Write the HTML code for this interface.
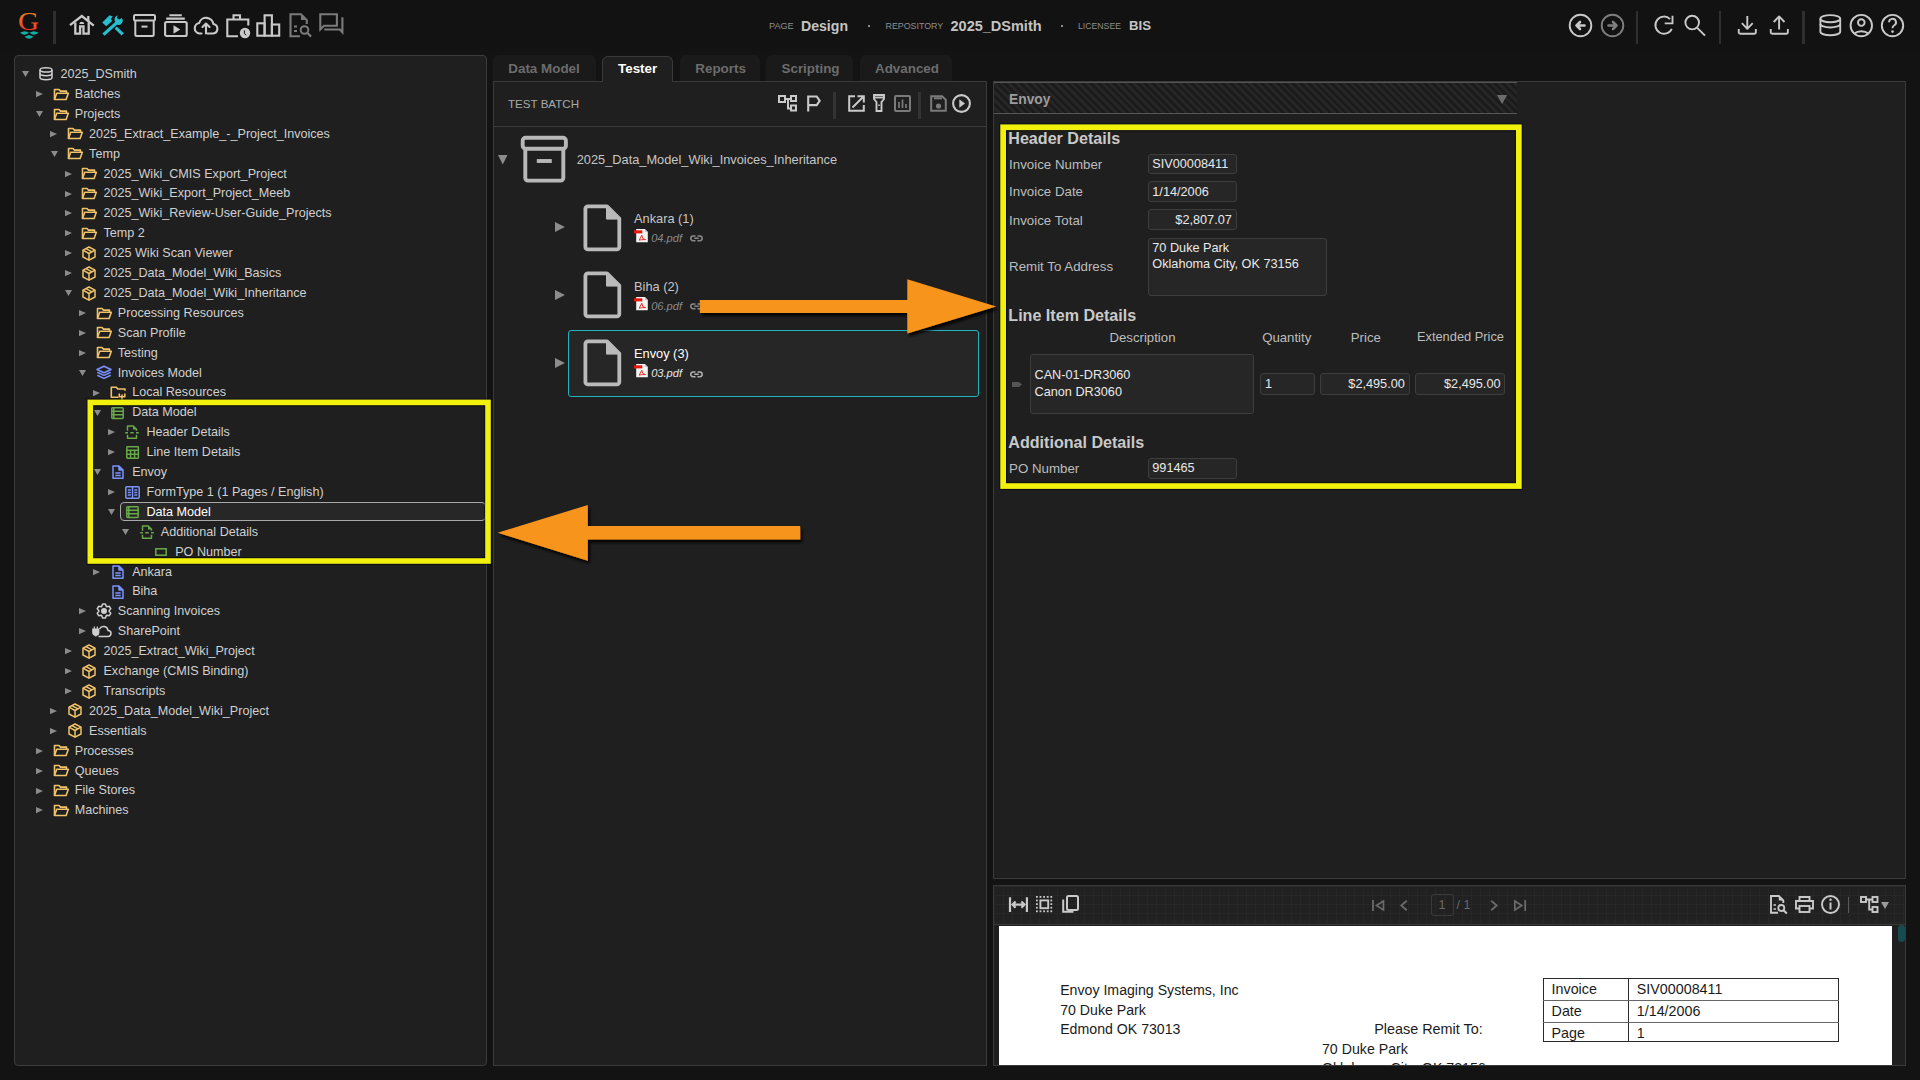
<!DOCTYPE html><html><head><meta charset="utf-8"><title>Design</title><style>
*{margin:0;padding:0;box-sizing:border-box}
html,body{width:1920px;height:1080px;overflow:hidden;background:#131313;font-family:"Liberation Sans",sans-serif;color:#c6c6c6}
.a{position:absolute}
.panel{position:absolute;background:#1f1f1f;border:1px solid #3a3a3a}
.row{position:absolute;height:20px;line-height:20px;white-space:nowrap;font-size:12.6px;color:#c6c6c6}
svg{position:absolute;overflow:visible}
.t{position:absolute;white-space:nowrap}
</style></head><body><div class="a" style="left:0;top:0;width:1920px;height:50px;background:#121212"></div><div class="panel" style="left:14px;top:55px;width:473px;height:1011px;border-radius:4px;border-color:#3b3b3b"></div><svg style="left:22.0px;top:71.2px" width="7" height="6" viewBox="0 0 7 6" ><path d="M0 0h7L3.5 6z" fill="#8c8c8c"/></svg><svg style="left:39.2px;top:67.4px" width="14" height="14" viewBox="0 0 14 14" ><g fill="none" stroke="#cfcfcf" stroke-width="1.5"><ellipse cx="7" cy="2.9" rx="6" ry="2.2"/><path d="M1 2.9v7.6c0 1.2 2.7 2.2 6 2.2s6-1 6-2.2V2.9"/><path d="M1 6.6c0 1.2 2.7 2.2 6 2.2s6-1 6-2.2"/></g></svg><div class="row" style="left:60.40px;top:64.00px;color:#d0d0d0">2025_DSmith</div><svg style="left:36.0px;top:91.00000000000001px" width="7" height="6.2" viewBox="0 0 7 6.2" ><path d="M0 0l7 3.1L0 6.2z" fill="#8c8c8c"/></svg><svg style="left:52.550000000000004px;top:87.60000000000001px" width="16" height="13" viewBox="0 0 16 13" ><g fill="none" stroke="#f0c26a" stroke-width="1.6" stroke-linejoin="round"><path d="M1.5 11.5V1.5h4.5l1.5 1.6h6v2.2"/><path d="M1.5 11.5l2.2-6.2h11.6l-2.2 6.2z"/></g></svg><div class="row" style="left:74.75px;top:83.90px;color:#d0d0d0">Batches</div><svg style="left:36.35px;top:111.0px" width="7" height="6" viewBox="0 0 7 6" ><path d="M0 0h7L3.5 6z" fill="#8c8c8c"/></svg><svg style="left:52.550000000000004px;top:107.5px" width="16" height="13" viewBox="0 0 16 13" ><g fill="none" stroke="#f0c26a" stroke-width="1.6" stroke-linejoin="round"><path d="M1.5 11.5V1.5h4.5l1.5 1.6h6v2.2"/><path d="M1.5 11.5l2.2-6.2h11.6l-2.2 6.2z"/></g></svg><div class="row" style="left:74.75px;top:103.80px;color:#d0d0d0">Projects</div><svg style="left:50.35px;top:130.79999999999998px" width="7" height="6.2" viewBox="0 0 7 6.2" ><path d="M0 0l7 3.1L0 6.2z" fill="#8c8c8c"/></svg><svg style="left:66.9px;top:127.39999999999998px" width="16" height="13" viewBox="0 0 16 13" ><g fill="none" stroke="#f0c26a" stroke-width="1.6" stroke-linejoin="round"><path d="M1.5 11.5V1.5h4.5l1.5 1.6h6v2.2"/><path d="M1.5 11.5l2.2-6.2h11.6l-2.2 6.2z"/></g></svg><div class="row" style="left:89.10px;top:123.70px;color:#d0d0d0">2025_Extract_Example_-_Project_Invoices</div><svg style="left:50.7px;top:150.79999999999998px" width="7" height="6" viewBox="0 0 7 6" ><path d="M0 0h7L3.5 6z" fill="#8c8c8c"/></svg><svg style="left:66.9px;top:147.29999999999998px" width="16" height="13" viewBox="0 0 16 13" ><g fill="none" stroke="#f0c26a" stroke-width="1.6" stroke-linejoin="round"><path d="M1.5 11.5V1.5h4.5l1.5 1.6h6v2.2"/><path d="M1.5 11.5l2.2-6.2h11.6l-2.2 6.2z"/></g></svg><div class="row" style="left:89.10px;top:143.60px;color:#d0d0d0">Temp</div><svg style="left:64.7px;top:170.6px" width="7" height="6.2" viewBox="0 0 7 6.2" ><path d="M0 0l7 3.1L0 6.2z" fill="#8c8c8c"/></svg><svg style="left:81.25px;top:167.2px" width="16" height="13" viewBox="0 0 16 13" ><g fill="none" stroke="#f0c26a" stroke-width="1.6" stroke-linejoin="round"><path d="M1.5 11.5V1.5h4.5l1.5 1.6h6v2.2"/><path d="M1.5 11.5l2.2-6.2h11.6l-2.2 6.2z"/></g></svg><div class="row" style="left:103.45px;top:163.50px;color:#d0d0d0">2025_Wiki_CMIS Export_Project</div><svg style="left:64.7px;top:190.49999999999997px" width="7" height="6.2" viewBox="0 0 7 6.2" ><path d="M0 0l7 3.1L0 6.2z" fill="#8c8c8c"/></svg><svg style="left:81.25px;top:187.09999999999997px" width="16" height="13" viewBox="0 0 16 13" ><g fill="none" stroke="#f0c26a" stroke-width="1.6" stroke-linejoin="round"><path d="M1.5 11.5V1.5h4.5l1.5 1.6h6v2.2"/><path d="M1.5 11.5l2.2-6.2h11.6l-2.2 6.2z"/></g></svg><div class="row" style="left:103.45px;top:183.40px;color:#d0d0d0">2025_Wiki_Export_Project_Meeb</div><svg style="left:64.7px;top:210.39999999999998px" width="7" height="6.2" viewBox="0 0 7 6.2" ><path d="M0 0l7 3.1L0 6.2z" fill="#8c8c8c"/></svg><svg style="left:81.25px;top:206.99999999999997px" width="16" height="13" viewBox="0 0 16 13" ><g fill="none" stroke="#f0c26a" stroke-width="1.6" stroke-linejoin="round"><path d="M1.5 11.5V1.5h4.5l1.5 1.6h6v2.2"/><path d="M1.5 11.5l2.2-6.2h11.6l-2.2 6.2z"/></g></svg><div class="row" style="left:103.45px;top:203.30px;color:#d0d0d0">2025_Wiki_Review-User-Guide_Projects</div><svg style="left:64.7px;top:230.29999999999998px" width="7" height="6.2" viewBox="0 0 7 6.2" ><path d="M0 0l7 3.1L0 6.2z" fill="#8c8c8c"/></svg><svg style="left:81.25px;top:226.89999999999998px" width="16" height="13" viewBox="0 0 16 13" ><g fill="none" stroke="#f0c26a" stroke-width="1.6" stroke-linejoin="round"><path d="M1.5 11.5V1.5h4.5l1.5 1.6h6v2.2"/><path d="M1.5 11.5l2.2-6.2h11.6l-2.2 6.2z"/></g></svg><div class="row" style="left:103.45px;top:223.20px;color:#d0d0d0">Temp 2</div><svg style="left:64.7px;top:250.2px" width="7" height="6.2" viewBox="0 0 7 6.2" ><path d="M0 0l7 3.1L0 6.2z" fill="#8c8c8c"/></svg><svg style="left:82.25px;top:245.7px" width="14" height="15" viewBox="0 0 14 15" ><g fill="none" stroke="#f0c26a" stroke-width="1.5" stroke-linejoin="round"><path d="M7 1l6 3.2v6.8L7 14.2 1 11V4.2z"/><path d="M1 4.2l6 3.3 6-3.3M7 7.5v6.7M4 2.6l6 3.3"/></g></svg><div class="row" style="left:103.45px;top:243.10px;color:#d0d0d0">2025 Wiki Scan Viewer</div><svg style="left:64.7px;top:270.09999999999997px" width="7" height="6.2" viewBox="0 0 7 6.2" ><path d="M0 0l7 3.1L0 6.2z" fill="#8c8c8c"/></svg><svg style="left:82.25px;top:265.59999999999997px" width="14" height="15" viewBox="0 0 14 15" ><g fill="none" stroke="#f0c26a" stroke-width="1.5" stroke-linejoin="round"><path d="M7 1l6 3.2v6.8L7 14.2 1 11V4.2z"/><path d="M1 4.2l6 3.3 6-3.3M7 7.5v6.7M4 2.6l6 3.3"/></g></svg><div class="row" style="left:103.45px;top:263.00px;color:#d0d0d0">2025_Data_Model_Wiki_Basics</div><svg style="left:65.05px;top:290.09999999999997px" width="7" height="6" viewBox="0 0 7 6" ><path d="M0 0h7L3.5 6z" fill="#8c8c8c"/></svg><svg style="left:82.25px;top:285.49999999999994px" width="14" height="15" viewBox="0 0 14 15" ><g fill="none" stroke="#f0c26a" stroke-width="1.5" stroke-linejoin="round"><path d="M7 1l6 3.2v6.8L7 14.2 1 11V4.2z"/><path d="M1 4.2l6 3.3 6-3.3M7 7.5v6.7M4 2.6l6 3.3"/></g></svg><div class="row" style="left:103.45px;top:282.90px;color:#d0d0d0">2025_Data_Model_Wiki_Inheritance</div><svg style="left:79.05px;top:309.8999999999999px" width="7" height="6.2" viewBox="0 0 7 6.2" ><path d="M0 0l7 3.1L0 6.2z" fill="#8c8c8c"/></svg><svg style="left:95.6px;top:306.49999999999994px" width="16" height="13" viewBox="0 0 16 13" ><g fill="none" stroke="#f0c26a" stroke-width="1.6" stroke-linejoin="round"><path d="M1.5 11.5V1.5h4.5l1.5 1.6h6v2.2"/><path d="M1.5 11.5l2.2-6.2h11.6l-2.2 6.2z"/></g></svg><div class="row" style="left:117.80px;top:302.80px;color:#d0d0d0">Processing Resources</div><svg style="left:79.05px;top:329.79999999999995px" width="7" height="6.2" viewBox="0 0 7 6.2" ><path d="M0 0l7 3.1L0 6.2z" fill="#8c8c8c"/></svg><svg style="left:95.6px;top:326.4px" width="16" height="13" viewBox="0 0 16 13" ><g fill="none" stroke="#f0c26a" stroke-width="1.6" stroke-linejoin="round"><path d="M1.5 11.5V1.5h4.5l1.5 1.6h6v2.2"/><path d="M1.5 11.5l2.2-6.2h11.6l-2.2 6.2z"/></g></svg><div class="row" style="left:117.80px;top:322.70px;color:#d0d0d0">Scan Profile</div><svg style="left:79.05px;top:349.69999999999993px" width="7" height="6.2" viewBox="0 0 7 6.2" ><path d="M0 0l7 3.1L0 6.2z" fill="#8c8c8c"/></svg><svg style="left:95.6px;top:346.29999999999995px" width="16" height="13" viewBox="0 0 16 13" ><g fill="none" stroke="#f0c26a" stroke-width="1.6" stroke-linejoin="round"><path d="M1.5 11.5V1.5h4.5l1.5 1.6h6v2.2"/><path d="M1.5 11.5l2.2-6.2h11.6l-2.2 6.2z"/></g></svg><div class="row" style="left:117.80px;top:342.60px;color:#d0d0d0">Testing</div><svg style="left:79.4px;top:369.7px" width="7" height="6" viewBox="0 0 7 6" ><path d="M0 0h7L3.5 6z" fill="#8c8c8c"/></svg><svg style="left:95.6px;top:365.4px" width="16" height="15" viewBox="0 0 16 15" ><g fill="none" stroke="#7b93ff" stroke-width="1.5" stroke-linejoin="round"><path d="M8 1.2l7 3.3-7 3.3-7-3.3z"/><path d="M1.3 7.2L8 10.4l6.7-3.2"/><path d="M1.3 10.2L8 13.4l6.7-3.2"/></g></svg><div class="row" style="left:117.80px;top:362.50px;color:#d0d0d0">Invoices Model</div><svg style="left:93.4px;top:389.49999999999994px" width="7" height="6.2" viewBox="0 0 7 6.2" ><path d="M0 0l7 3.1L0 6.2z" fill="#8c8c8c"/></svg><svg style="left:109.95px;top:386.29999999999995px" width="17" height="15" viewBox="0 0 17 15" ><g fill="none" stroke="#f0c26a" stroke-width="1.6" stroke-linejoin="round"><path d="M8.5 11.3H1.3V1.3h5l1.5 1.7h7.2v1.8"/><path d="M12 14.5V8.5M9.3 7.5v3.3h5.5V7.5"/></g></svg><div class="row" style="left:132.15px;top:382.40px;color:#d0d0d0">Local Resources</div><svg style="left:93.75px;top:409.49999999999994px" width="7" height="6" viewBox="0 0 7 6" ><path d="M0 0h7L3.5 6z" fill="#8c8c8c"/></svg><svg style="left:111.45px;top:406.49999999999994px" width="13" height="12" viewBox="0 0 13 12" ><g fill="none" stroke="#68a84a" stroke-width="1.5"><rect x="0.8" y="0.8" width="11.4" height="10.6" rx="0.8"/><path d="M0.8 4.3h11.4M0.8 7.8h11.4M2.8 0.8v10.6"/></g></svg><div class="row" style="left:132.15px;top:402.30px;color:#d0d0d0">Data Model</div><svg style="left:107.75px;top:429.29999999999995px" width="7" height="6.2" viewBox="0 0 7 6.2" ><path d="M0 0l7 3.1L0 6.2z" fill="#8c8c8c"/></svg><svg style="left:125.30000000000001px;top:425.4px" width="14" height="15" viewBox="0 0 14 15" ><g fill="none" stroke="#68a84a" stroke-width="1.5" stroke-linejoin="round"><path d="M2.5 5.8V1h5.7l3.3 3.3v1.5"/><path d="M2.5 9.8v3.5h9V9.8"/><path d="M0.2 7.8h2.8M5.3 7.8h3.4M11 7.8h2.8"/></g><path d="M8 1l3.5 3.5H8z" fill="#68a84a"/></svg><div class="row" style="left:146.50px;top:422.20px;color:#d0d0d0">Header Details</div><svg style="left:107.75px;top:449.19999999999993px" width="7" height="6.2" viewBox="0 0 7 6.2" ><path d="M0 0l7 3.1L0 6.2z" fill="#8c8c8c"/></svg><svg style="left:125.70000000000002px;top:445.99999999999994px" width="13.2" height="13" viewBox="0 0 13.2 13" ><g fill="none" stroke="#68a84a" stroke-width="1.5"><rect x="0.8" y="0.8" width="11.6" height="11.4" rx="0.6"/><path d="M0.8 4.2h11.6M0.8 8.2h11.6M4.6 4.2v8M8.6 4.2v8"/></g></svg><div class="row" style="left:146.50px;top:442.10px;color:#d0d0d0">Line Item Details</div><svg style="left:93.75px;top:469.2px" width="7" height="6" viewBox="0 0 7 6" ><path d="M0 0h7L3.5 6z" fill="#8c8c8c"/></svg><svg style="left:111.95px;top:465.2px" width="12" height="14" viewBox="0 0 12 14" ><g fill="none" stroke="#7b93ff" stroke-width="1.5" stroke-linejoin="round"><path d="M1 1h6l4 4v8.2H1z"/><path d="M7 1v4h4" fill="#7b93ff"/></g><path d="M3.3 8h5.4M3.3 10.6h5.4" stroke="#7b93ff" stroke-width="1.5"/></svg><div class="row" style="left:132.15px;top:462.00px;color:#d0d0d0">Envoy</div><svg style="left:107.75px;top:488.99999999999994px" width="7" height="6.2" viewBox="0 0 7 6.2" ><path d="M0 0l7 3.1L0 6.2z" fill="#8c8c8c"/></svg><svg style="left:124.80000000000001px;top:485.59999999999997px" width="15" height="13" viewBox="0 0 15 13" ><g fill="none" stroke="#7b93ff" stroke-width="1.5"><rect x="0.8" y="0.8" width="13.4" height="11.4" rx="1"/><path d="M7.5 0.8v11.4"/></g><path d="M2.8 4h3M2.8 6.5h3M2.8 9h3M9.3 4h3M9.3 6.5h3M9.3 9h3" stroke="#7b93ff" stroke-width="1.5"/></svg><div class="row" style="left:146.50px;top:481.90px;color:#d0d0d0">FormType 1 (1 Pages / English)</div><div class="a" style="left:119.5px;top:502.40px;width:366px;height:19px;border:1px solid #a9a9a9;border-radius:4px;background:#272727"></div><svg style="left:108.1px;top:508.99999999999994px" width="7" height="6" viewBox="0 0 7 6" ><path d="M0 0h7L3.5 6z" fill="#8c8c8c"/></svg><svg style="left:125.80000000000001px;top:505.99999999999994px" width="13" height="12" viewBox="0 0 13 12" ><g fill="none" stroke="#68a84a" stroke-width="1.5"><rect x="0.8" y="0.8" width="11.4" height="10.6" rx="0.8"/><path d="M0.8 4.3h11.4M0.8 7.8h11.4M2.8 0.8v10.6"/></g></svg><div class="row" style="left:146.50px;top:501.80px;color:#ffffff">Data Model</div><svg style="left:122.45px;top:528.9000000000001px" width="7" height="6" viewBox="0 0 7 6" ><path d="M0 0h7L3.5 6z" fill="#8c8c8c"/></svg><svg style="left:139.65px;top:524.9000000000001px" width="14" height="15" viewBox="0 0 14 15" ><g fill="none" stroke="#68a84a" stroke-width="1.5" stroke-linejoin="round"><path d="M2.5 5.8V1h5.7l3.3 3.3v1.5"/><path d="M2.5 9.8v3.5h9V9.8"/><path d="M0.2 7.8h2.8M5.3 7.8h3.4M11 7.8h2.8"/></g><path d="M8 1l3.5 3.5H8z" fill="#68a84a"/></svg><div class="row" style="left:160.85px;top:521.70px;color:#d0d0d0">Additional Details</div><svg style="left:155.0px;top:547.8px" width="12" height="8" viewBox="0 0 12 8" ><rect x="0.8" y="0.8" width="10.4" height="6.4" fill="none" stroke="#68a84a" stroke-width="1.5"/></svg><div class="row" style="left:175.20px;top:541.60px;color:#d0d0d0">PO Number</div><svg style="left:93.4px;top:568.6px" width="7" height="6.2" viewBox="0 0 7 6.2" ><path d="M0 0l7 3.1L0 6.2z" fill="#8c8c8c"/></svg><svg style="left:111.95px;top:564.7px" width="12" height="14" viewBox="0 0 12 14" ><g fill="none" stroke="#7b93ff" stroke-width="1.5" stroke-linejoin="round"><path d="M1 1h6l4 4v8.2H1z"/><path d="M7 1v4h4" fill="#7b93ff"/></g><path d="M3.3 8h5.4M3.3 10.6h5.4" stroke="#7b93ff" stroke-width="1.5"/></svg><div class="row" style="left:132.15px;top:561.50px;color:#d0d0d0">Ankara</div><svg style="left:111.95px;top:584.6px" width="12" height="14" viewBox="0 0 12 14" ><g fill="none" stroke="#7b93ff" stroke-width="1.5" stroke-linejoin="round"><path d="M1 1h6l4 4v8.2H1z"/><path d="M7 1v4h4" fill="#7b93ff"/></g><path d="M3.3 8h5.4M3.3 10.6h5.4" stroke="#7b93ff" stroke-width="1.5"/></svg><div class="row" style="left:132.15px;top:581.40px;color:#d0d0d0">Biha</div><svg style="left:79.05px;top:608.4px" width="7" height="6.2" viewBox="0 0 7 6.2" ><path d="M0 0l7 3.1L0 6.2z" fill="#8c8c8c"/></svg><svg style="left:96.6px;top:603.5px" width="14" height="14" viewBox="0 0 14 14" ><polygon points="5.59,0.04 8.41,0.04 9.40,2.61 9.60,2.73 12.32,2.30 13.73,4.74 12.00,6.88 12.00,7.12 13.73,9.26 12.32,11.70 9.60,11.27 9.40,11.39 8.41,13.96 5.59,13.96 4.60,11.39 4.40,11.27 1.68,11.70 0.27,9.26 2.00,7.12 2.00,6.88 0.27,4.74 1.68,2.30 4.40,2.73 4.60,2.61" fill="none" stroke="#cfcfcf" stroke-width="1.5" stroke-linejoin="round"/><circle cx="7" cy="7" r="3" fill="#cfcfcf"/></svg><div class="row" style="left:117.80px;top:601.30px;color:#d0d0d0">Scanning Invoices</div><svg style="left:79.05px;top:628.3px" width="7" height="6.2" viewBox="0 0 7 6.2" ><path d="M0 0l7 3.1L0 6.2z" fill="#8c8c8c"/></svg><svg style="left:92.1px;top:624.4px" width="20" height="15" viewBox="0 0 20 15" ><path d="M6.5 12.5h9.5a3 3 0 0 0 0-6 4.5 4.5 0 0 0-8.5-1.5" fill="none" stroke="#cfcfcf" stroke-width="1.5"/><path d="M0.8 5h6v3.5a3 3 0 0 1-6 0z M2.3 2.5v2.5M5.3 2.5v2.5M3.8 11v1.5" fill="#cfcfcf" stroke="#cfcfcf" stroke-width="1.2"/></svg><div class="row" style="left:117.80px;top:621.20px;color:#d0d0d0">SharePoint</div><svg style="left:64.7px;top:648.1999999999999px" width="7" height="6.2" viewBox="0 0 7 6.2" ><path d="M0 0l7 3.1L0 6.2z" fill="#8c8c8c"/></svg><svg style="left:82.25px;top:643.6999999999999px" width="14" height="15" viewBox="0 0 14 15" ><g fill="none" stroke="#f0c26a" stroke-width="1.5" stroke-linejoin="round"><path d="M7 1l6 3.2v6.8L7 14.2 1 11V4.2z"/><path d="M1 4.2l6 3.3 6-3.3M7 7.5v6.7M4 2.6l6 3.3"/></g></svg><div class="row" style="left:103.45px;top:641.10px;color:#d0d0d0">2025_Extract_Wiki_Project</div><svg style="left:64.7px;top:668.1px" width="7" height="6.2" viewBox="0 0 7 6.2" ><path d="M0 0l7 3.1L0 6.2z" fill="#8c8c8c"/></svg><svg style="left:82.25px;top:663.6px" width="14" height="15" viewBox="0 0 14 15" ><g fill="none" stroke="#f0c26a" stroke-width="1.5" stroke-linejoin="round"><path d="M7 1l6 3.2v6.8L7 14.2 1 11V4.2z"/><path d="M1 4.2l6 3.3 6-3.3M7 7.5v6.7M4 2.6l6 3.3"/></g></svg><div class="row" style="left:103.45px;top:661.00px;color:#d0d0d0">Exchange (CMIS Binding)</div><svg style="left:64.7px;top:688.0px" width="7" height="6.2" viewBox="0 0 7 6.2" ><path d="M0 0l7 3.1L0 6.2z" fill="#8c8c8c"/></svg><svg style="left:82.25px;top:683.5px" width="14" height="15" viewBox="0 0 14 15" ><g fill="none" stroke="#f0c26a" stroke-width="1.5" stroke-linejoin="round"><path d="M7 1l6 3.2v6.8L7 14.2 1 11V4.2z"/><path d="M1 4.2l6 3.3 6-3.3M7 7.5v6.7M4 2.6l6 3.3"/></g></svg><div class="row" style="left:103.45px;top:680.90px;color:#d0d0d0">Transcripts</div><svg style="left:50.35px;top:707.9px" width="7" height="6.2" viewBox="0 0 7 6.2" ><path d="M0 0l7 3.1L0 6.2z" fill="#8c8c8c"/></svg><svg style="left:67.9px;top:703.4px" width="14" height="15" viewBox="0 0 14 15" ><g fill="none" stroke="#f0c26a" stroke-width="1.5" stroke-linejoin="round"><path d="M7 1l6 3.2v6.8L7 14.2 1 11V4.2z"/><path d="M1 4.2l6 3.3 6-3.3M7 7.5v6.7M4 2.6l6 3.3"/></g></svg><div class="row" style="left:89.10px;top:700.80px;color:#d0d0d0">2025_Data_Model_Wiki_Project</div><svg style="left:50.35px;top:727.8px" width="7" height="6.2" viewBox="0 0 7 6.2" ><path d="M0 0l7 3.1L0 6.2z" fill="#8c8c8c"/></svg><svg style="left:67.9px;top:723.3px" width="14" height="15" viewBox="0 0 14 15" ><g fill="none" stroke="#f0c26a" stroke-width="1.5" stroke-linejoin="round"><path d="M7 1l6 3.2v6.8L7 14.2 1 11V4.2z"/><path d="M1 4.2l6 3.3 6-3.3M7 7.5v6.7M4 2.6l6 3.3"/></g></svg><div class="row" style="left:89.10px;top:720.70px;color:#d0d0d0">Essentials</div><svg style="left:36.0px;top:747.6999999999999px" width="7" height="6.2" viewBox="0 0 7 6.2" ><path d="M0 0l7 3.1L0 6.2z" fill="#8c8c8c"/></svg><svg style="left:52.550000000000004px;top:744.3px" width="16" height="13" viewBox="0 0 16 13" ><g fill="none" stroke="#f0c26a" stroke-width="1.6" stroke-linejoin="round"><path d="M1.5 11.5V1.5h4.5l1.5 1.6h6v2.2"/><path d="M1.5 11.5l2.2-6.2h11.6l-2.2 6.2z"/></g></svg><div class="row" style="left:74.75px;top:740.60px;color:#d0d0d0">Processes</div><svg style="left:36.0px;top:767.6px" width="7" height="6.2" viewBox="0 0 7 6.2" ><path d="M0 0l7 3.1L0 6.2z" fill="#8c8c8c"/></svg><svg style="left:52.550000000000004px;top:764.2px" width="16" height="13" viewBox="0 0 16 13" ><g fill="none" stroke="#f0c26a" stroke-width="1.6" stroke-linejoin="round"><path d="M1.5 11.5V1.5h4.5l1.5 1.6h6v2.2"/><path d="M1.5 11.5l2.2-6.2h11.6l-2.2 6.2z"/></g></svg><div class="row" style="left:74.75px;top:760.50px;color:#d0d0d0">Queues</div><svg style="left:36.0px;top:787.5px" width="7" height="6.2" viewBox="0 0 7 6.2" ><path d="M0 0l7 3.1L0 6.2z" fill="#8c8c8c"/></svg><svg style="left:52.550000000000004px;top:784.1px" width="16" height="13" viewBox="0 0 16 13" ><g fill="none" stroke="#f0c26a" stroke-width="1.6" stroke-linejoin="round"><path d="M1.5 11.5V1.5h4.5l1.5 1.6h6v2.2"/><path d="M1.5 11.5l2.2-6.2h11.6l-2.2 6.2z"/></g></svg><div class="row" style="left:74.75px;top:780.40px;color:#d0d0d0">File Stores</div><svg style="left:36.0px;top:807.4px" width="7" height="6.2" viewBox="0 0 7 6.2" ><path d="M0 0l7 3.1L0 6.2z" fill="#8c8c8c"/></svg><svg style="left:52.550000000000004px;top:804.0px" width="16" height="13" viewBox="0 0 16 13" ><g fill="none" stroke="#f0c26a" stroke-width="1.6" stroke-linejoin="round"><path d="M1.5 11.5V1.5h4.5l1.5 1.6h6v2.2"/><path d="M1.5 11.5l2.2-6.2h11.6l-2.2 6.2z"/></g></svg><div class="row" style="left:74.75px;top:800.30px;color:#d0d0d0">Machines</div><svg style="left:14px;top:8px" width="30" height="34" viewBox="0 0 30 34"><defs><linearGradient id="lg" x1="0" y1="0" x2="0" y2="1"><stop offset="0" stop-color="#f39c1c"/><stop offset="1" stop-color="#e8262a"/></linearGradient></defs><text x="0" y="0" transform="translate(14.4 21.6) scale(1.14 1)" text-anchor="middle" font-family="Liberation Serif" font-size="25.5" fill="url(#lg)">G</text><g fill="#10b0a8"><path d="M6 24.8q2.8-1.2 4.5-1.6 1.7.4 4.5 1.6-2.5 1.8-4.5 2-2-.2-4.5-2z"/><path d="M15.5 24.8q2.8-1.2 4.5-1.6 1.7.4 4.5 1.6-2.5 1.8-4.5 2-2-.2-4.5-2z"/><path d="M10.5 28.8q2.8-1.4 4.5-1.8 1.7.4 4.5 1.8-2.5 1.8-4.5 2-2-.2-4.5-2z"/></g></svg><div class="a" style="left:53px;top:11px;width:2.6px;height:33px;background:#2f2f2f"></div><svg style="left:69px;top:14px" width="26" height="22" viewBox="0 0 26 22" ><g fill="none" stroke="#c9c9c9" stroke-width="2.3" stroke-linejoin="miter"><path d="M1 11.2L12.8 2 24.8 11.6"/><path d="M6.3 8.6V19.6H11.1V12.4h3.4v7.2h5.2V8.6"/><path d="M19.3 8V2"/></g><path d="M10.4 9.9a2.4 2.2 0 0 1 4.8 0z" fill="#c9c9c9"/></svg><svg style="left:101px;top:14px" width="23" height="23" viewBox="0 0 23 23" ><g fill="#27bfd0"><path d="M1.2 8.5L8.6 1.2 11.8 2.6 9.8 5 11.2 7 5.2 12.2z"/><path d="M1.3 19.5L15 7.2 17.3 9.5 3.6 21.8z"/><path d="M13.6 14.8l2.2-2.2 7 6.6-2.2 2.4z"/><path d="M15.2 8.8a4.3 4.3 0 0 1 1.5-7.6l-.9 2.9 2.6 1.5 2.4-1.6a4.3 4.3 0 0 1-5.6 6.3z"/></g></svg><svg style="left:132px;top:13px" width="25" height="25" viewBox="0 0 25 25" ><g fill="none" stroke="#c9c9c9" stroke-width="2"><rect x="2" y="2.1" width="21" height="5.4" rx="1.2"/><path d="M3.3 7.5v14a1.5 1.5 0 0 0 1.5 1.5h15.4a1.5 1.5 0 0 0 1.5-1.5v-14"/><path d="M9.5 13.6h6"/></g></svg><svg style="left:163px;top:13px" width="25" height="25" viewBox="0 0 25 25" ><g fill="none" stroke="#c9c9c9" stroke-width="2.1"><path d="M6.4 2.2h12.4M3.2 5.6h18.6"/><rect x="2.1" y="9" width="21.6" height="14" rx="1.5"/></g><path d="M10.5 12.2l6.8 4.3-6.8 4.3z" fill="#c9c9c9"/></svg><svg style="left:193px;top:14px" width="27" height="21" viewBox="0 0 27 21" ><g fill="none" stroke="#c9c9c9" stroke-width="2.1" stroke-linejoin="round" stroke-linecap="round"><path d="M8.5 19.5H6.5a5.3 5.3 0 0 1-.3-10.5 7.3 7.3 0 0 1 14.2 1 4.8 4.8 0 0 1-.3 9.5h-5.5"/><path d="M13 19.5V10M9.5 13l3.5-3.5 3.5 3.5"/></g></svg><svg style="left:225px;top:13px" width="27" height="26" viewBox="0 0 27 26" ><g fill="none" stroke="#c9c9c9" stroke-width="2.1"><path d="M8.5 6.5V2.2h6.5v4.3"/><path d="M13 23.3H2.3V6.5h21v6"/></g><circle cx="20" cy="20" r="5.2" fill="#c9c9c9"/><path d="M19.4 17.3v3.2l1.8 1.6" stroke="#121212" stroke-width="1" fill="none"/></svg><svg style="left:256px;top:14px" width="26" height="23" viewBox="0 0 26 23" ><g fill="none" stroke="#c9c9c9" stroke-width="2.1"><rect x="1.3" y="9.3" width="7.3" height="12.4"/><rect x="8.6" y="1.3" width="7.3" height="20.4"/><rect x="15.9" y="10.5" width="7.3" height="11.2"/></g></svg><svg style="left:289px;top:13px" width="25" height="26" viewBox="0 0 25 26" ><g fill="none" stroke="#7a7a7a" stroke-width="2.1"><path d="M11 23.2H1.5V1.3h10.5l5.8 5.8V11"/></g><path d="M12 1.3l5.8 5.8H12z" fill="#7a7a7a"/><path d="M5 13.5h3M5 18h3" stroke="#7a7a7a" stroke-width="1.8"/><circle cx="15.5" cy="17" r="3.8" fill="none" stroke="#7a7a7a" stroke-width="2"/><path d="M18.3 19.8l3.8 3.8" stroke="#7a7a7a" stroke-width="2.2"/></svg><svg style="left:319px;top:13px" width="25" height="25" viewBox="0 0 25 25" ><g fill="none" stroke="#7a7a7a" stroke-width="2.1" stroke-linejoin="miter"><path d="M1.3 16.5V1.3h16.6v11.5H5z"/><path d="M5.3 16.5h15.6l2.5 2.8V4.3"/></g></svg><div class="t" style="left:769px;top:19px;font-size:9.1px;color:#8e8e8e;line-height:14px">PAGE</div><div class="t" style="left:801px;top:17px;font-size:14.1px;font-weight:bold;color:#c4c4c4;line-height:18px">Design</div><div class="a" style="left:867.6px;top:24.8px;width:2.4px;height:2.4px;background:#8e8e8e"></div><div class="t" style="left:885.5px;top:19px;font-size:8.85px;color:#8e8e8e;line-height:14px">REPOSITORY</div><div class="t" style="left:950.5px;top:17px;font-size:14.5px;font-weight:bold;color:#c4c4c4;line-height:18px">2025_DSmith</div><div class="a" style="left:1060.6px;top:24.8px;width:2.4px;height:2.4px;background:#8e8e8e"></div><div class="t" style="left:1078px;top:19px;font-size:8.7px;color:#8e8e8e;line-height:14px">LICENSEE</div><div class="t" style="left:1129px;top:17px;font-size:13.2px;font-weight:bold;color:#c4c4c4;line-height:18px">BIS</div><svg style="left:1568.0px;top:13px" width="25" height="25" viewBox="0 0 25 25" ><g transform="translate(12.5 12.5)"><circle r="10.8" fill="none" stroke="#c9c9c9" stroke-width="1.9"/><path d="M-4 0h8M-4 0l3.5-3.5M-4 0l3.5 3.5" stroke="#c9c9c9" stroke-width="2.6" fill="none" stroke-linecap="round" stroke-linejoin="round"/></g></svg><svg style="left:1599.5px;top:13px" width="25" height="25" viewBox="0 0 25 25" ><g transform="translate(12.5 12.5)"><circle r="10.8" fill="none" stroke="#7e7e7e" stroke-width="1.9"/><path d="M4 0h-8M4 0l-3.5-3.5M4 0l-3.5 3.5" stroke="#7e7e7e" stroke-width="2.6" fill="none" stroke-linecap="round" stroke-linejoin="round"/></g></svg><div class="a" style="left:1635.5px;top:11px;width:2.5px;height:33px;background:#2f2f2f"></div><div class="a" style="left:1718.8px;top:11px;width:2.5px;height:33px;background:#2f2f2f"></div><div class="a" style="left:1802.2px;top:11px;width:2.5px;height:33px;background:#2f2f2f"></div><svg style="left:1654px;top:15px" width="21" height="21" viewBox="0 0 21 21" ><g fill="none" stroke="#c9c9c9" stroke-width="1.9"><path d="M17.8 13.8A8.6 8.6 0 1 1 16.1 4.1"/><path d="M18.5 0.8v7.6h-7.8"/></g></svg><svg style="left:1684px;top:15px" width="22" height="22" viewBox="0 0 22 22" ><g fill="none" stroke="#c9c9c9" stroke-width="1.9"><circle cx="8.2" cy="7.6" r="6.8"/><path d="M13 12.6l8 8"/></g></svg><svg style="left:1737px;top:15px" width="21" height="21" viewBox="0 0 21 21" ><g fill="none" stroke="#c9c9c9" stroke-width="1.9" stroke-linejoin="round"><path d="M10.3 1v13.5M4.9 8.2l5.4 5.6 5.4-5.6"/><path d="M1.75 14v3.2a1.5 1.5 0 0 0 1.5 1.5h14.1a1.5 1.5 0 0 0 1.5-1.5V14"/></g></svg><svg style="left:1768.5px;top:15px" width="21" height="21" viewBox="0 0 21 21" ><g fill="none" stroke="#c9c9c9" stroke-width="1.9" stroke-linejoin="round"><path d="M10.1 14.5V1.5M4.7 7l5.4-5.6 5.4 5.6"/><path d="M1.75 14v3.2a1.5 1.5 0 0 0 1.5 1.5h14.1a1.5 1.5 0 0 0 1.5-1.5V14"/></g></svg><svg style="left:1818.5px;top:14px" width="23" height="23" viewBox="0 0 23 23" ><g fill="none" stroke="#c9c9c9" stroke-width="1.9"><ellipse cx="11.3" cy="4.7" rx="9.9" ry="3.6"/><path d="M1.4 4.7v13c0 2 4.4 3.6 9.9 3.6s9.9-1.6 9.9-3.6v-13"/><path d="M1.4 9.9c0 2 4.4 3.6 9.9 3.6s9.9-1.6 9.9-3.6"/></g></svg><svg style="left:1848.7px;top:13px" width="25" height="25" viewBox="0 0 25 25" ><g fill="none" stroke="#c9c9c9" stroke-width="1.9"><circle cx="12.3" cy="12.6" r="10.7"/><circle cx="12.3" cy="9.6" r="3.3"/><path d="M5.3 20.5a9 6.2 0 0 1 14 0"/></g></svg><svg style="left:1879.5px;top:13px" width="25" height="25" viewBox="0 0 25 25" ><g fill="none" stroke="#c9c9c9" stroke-width="1.9"><circle cx="12.5" cy="12.6" r="10.7"/><path d="M9 9.3a3.5 3.5 0 1 1 5 3.2c-1.2.6-1.5 1.3-1.5 2.8"/></g><circle cx="12.5" cy="18.6" r="1.3" fill="#c9c9c9"/></svg><div class="a" style="left:493px;top:55px;width:103.0px;height:26px;background:#1a1a1a;border-radius:6px 6px 0 0"></div><div class="t" style="top:59.55px;font-size:13.4px;line-height:17.42px;color:#6c6c6c;font-weight:bold;left:508.30px;">Data Model</div><div class="a" style="left:602.4px;top:56px;width:70.4px;height:26px;background:#1f1f1f;border:1px solid #3a3a3a;border-bottom:none;border-radius:6px 6px 0 0;z-index:2"></div><div class="t" style="top:59.55px;font-size:13.4px;line-height:17.42px;color:#ffffff;font-weight:bold;left:618.00px;z-index:3">Tester</div><div class="a" style="left:680px;top:55px;width:80.0px;height:26px;background:#1a1a1a;border-radius:6px 6px 0 0"></div><div class="t" style="top:59.55px;font-size:13.4px;line-height:17.42px;color:#6c6c6c;font-weight:bold;left:695.30px;">Reports</div><div class="a" style="left:766.3px;top:55px;width:86.7px;height:26px;background:#1a1a1a;border-radius:6px 6px 0 0"></div><div class="t" style="top:59.55px;font-size:13.4px;line-height:17.42px;color:#6c6c6c;font-weight:bold;left:781.50px;">Scripting</div><div class="a" style="left:860px;top:55px;width:92.0px;height:26px;background:#1a1a1a;border-radius:6px 6px 0 0"></div><div class="t" style="top:59.55px;font-size:13.4px;line-height:17.42px;color:#6c6c6c;font-weight:bold;left:875.00px;">Advanced</div><div class="panel" style="left:493px;top:81px;width:494px;height:985px"></div><div class="a" style="left:494px;top:126px;width:492px;height:1px;background:#3a3a3a"></div><div class="t" style="top:96.34px;font-size:11.6px;line-height:15.08px;color:#a9a9a9;font-weight:normal;left:508.00px;">TEST BATCH</div><svg style="left:778px;top:95px" width="19" height="17" viewBox="0 0 19 17" ><g fill="none" stroke="#c9c9c9" stroke-width="2"><rect x="1" y="1" width="6" height="6"/><rect x="13" y="1" width="5" height="5"/><rect x="13" y="10.5" width="5" height="5"/><path d="M7 4h6M10 4v9.5h3"/></g></svg><svg style="left:807px;top:95px" width="14" height="17" viewBox="0 0 14 17" ><path d="M1.2 16.5V1.5h8.5l3 4.3-3 4.3H1.2" fill="none" stroke="#c9c9c9" stroke-width="2.1"/></svg><div class="a" style="left:833.3px;top:92px;width:2.4px;height:27px;background:#333"></div><svg style="left:848px;top:95px" width="17" height="17" viewBox="0 0 17 17" ><g fill="none" stroke="#c9c9c9" stroke-width="2"><path d="M7 1.2H1.2v14.6h14.6V10"/><path d="M4.5 12.5L15.5 1.5M9.5 1.2h6.3v6.3"/></g></svg><svg style="left:873px;top:94px" width="12" height="18" viewBox="0 0 12 18" ><g fill="none" stroke="#c9c9c9" stroke-width="1.9"><path d="M1 1h10v4L8.5 8v9h-5V8L1 5z"/><path d="M1 3.5h10"/></g><path d="M5.2 11.3h1.6" stroke="#c9c9c9" stroke-width="1.6"/></svg><svg style="left:893.5px;top:95px" width="17" height="17" viewBox="0 0 17 17" ><g fill="none" stroke="#7a7a7a" stroke-width="2"><rect x="1" y="1" width="15" height="15" rx="1"/></g><path d="M5 13V7M8.5 13V4.5M12 13V9" stroke="#7a7a7a" stroke-width="1.7"/></svg><div class="a" style="left:918.3px;top:92px;width:2.4px;height:27px;background:#333"></div><svg style="left:930px;top:95px" width="17" height="17" viewBox="0 0 17 17" ><path d="M1.2 1.2h11l3.6 3.6v11H1.2z" fill="none" stroke="#7a7a7a" stroke-width="2"/><path d="M4 3.3h8" stroke="#7a7a7a" stroke-width="2"/><circle cx="8.5" cy="11" r="2.6" fill="#7a7a7a"/></svg><svg style="left:952px;top:94px" width="19" height="19" viewBox="0 0 19 19" ><circle cx="9.5" cy="9.5" r="8.4" fill="none" stroke="#c9c9c9" stroke-width="2.1"/><path d="M7.3 5.3l5.7 4.2-5.7 4.2z" fill="#c9c9c9"/></svg><svg style="left:497.5px;top:155px" width="10" height="10" viewBox="0 0 10 10" ><path d="M0 0h9.5L4.75 9.5z" fill="#8c8c8c"/></svg><svg style="left:520px;top:135px" width="48" height="48" viewBox="0 0 48 48" ><g fill="none" stroke="#b8b8b8" stroke-width="3.9"><rect x="2.7" y="2.8" width="43.2" height="10.9" rx="3"/><path d="M5.3 13.7v29.2a2.7 2.7 0 0 0 2.7 2.7h32.6a2.7 2.7 0 0 0 2.7-2.7V13.7"/><path d="M16.8 26h15"/></g></svg><div class="t" style="top:151.84px;font-size:12.8px;line-height:16.64px;color:#c6c6c6;font-weight:normal;left:576.70px;">2025_Data_Model_Wiki_Invoices_Inheritance</div><svg style="left:554.5px;top:222.4px" width="10" height="10" viewBox="0 0 10 10" ><path d="M0 0l9.9 5L0 10z" fill="#8c8c8c"/></svg><svg style="left:582.5px;top:203.5px" width="39" height="48" viewBox="0 0 39 48" ><path d="M5 2.3h19l12.3 12.3v28.3a2.5 2.5 0 0 1-2.5 2.5H4.9a2.5 2.5 0 0 1-2.5-2.5V4.8a2.5 2.5 0 0 1 2.5-2.5z" fill="none" stroke="#bababa" stroke-width="3.8" stroke-linejoin="round"/><path d="M23.5 2.3l12.8 12.8H23.5z" fill="#bababa" stroke="#bababa" stroke-width="1" stroke-linejoin="round"/></svg><div class="t" style="top:210.94px;font-size:12.8px;line-height:16.64px;color:#c6c6c6;font-weight:normal;left:634.00px;">Ankara (1)</div><svg style="left:634px;top:229.0px" width="14" height="14" viewBox="0 0 14 14" ><path d="M2.2 0h8.6l3 3v10.3H2.2z" fill="#f4f4f4"/><path d="M10.8 0v3h3z" fill="#c8c8c8"/><rect x="0" y="1.3" width="8.3" height="3.1" fill="#e8180c"/><path d="M5.2 11.2l2.6-5 1.2 3.6 2.6.8-4.2.1z" fill="none" stroke="#e0241a" stroke-width="0.9"/></svg><div class="t" style="top:231.24px;font-size:11.1px;line-height:14.43px;color:#8a8a8a;font-weight:normal;font-style:italic;left:651.20px;">04.pdf</div><svg style="left:689.5px;top:235.3px" width="13" height="7" viewBox="0 0 13 7" ><g fill="none" stroke="#8a8a8a" stroke-width="1.5"><path d="M5.5 0.9H3.2a2.4 2.4 0 0 0 0 4.8h2.3M7.5 0.9h2.3a2.4 2.4 0 0 1 0 4.8H7.5M4.3 3.3h4.4"/></g></svg><svg style="left:554.5px;top:290.0px" width="10" height="10" viewBox="0 0 10 10" ><path d="M0 0l9.9 5L0 10z" fill="#8c8c8c"/></svg><svg style="left:582.5px;top:271.1px" width="39" height="48" viewBox="0 0 39 48" ><path d="M5 2.3h19l12.3 12.3v28.3a2.5 2.5 0 0 1-2.5 2.5H4.9a2.5 2.5 0 0 1-2.5-2.5V4.8a2.5 2.5 0 0 1 2.5-2.5z" fill="none" stroke="#bababa" stroke-width="3.8" stroke-linejoin="round"/><path d="M23.5 2.3l12.8 12.8H23.5z" fill="#bababa" stroke="#bababa" stroke-width="1" stroke-linejoin="round"/></svg><div class="t" style="top:278.54px;font-size:12.8px;line-height:16.64px;color:#c6c6c6;font-weight:normal;left:634.00px;">Biha (2)</div><svg style="left:634px;top:296.6px" width="14" height="14" viewBox="0 0 14 14" ><path d="M2.2 0h8.6l3 3v10.3H2.2z" fill="#f4f4f4"/><path d="M10.8 0v3h3z" fill="#c8c8c8"/><rect x="0" y="1.3" width="8.3" height="3.1" fill="#e8180c"/><path d="M5.2 11.2l2.6-5 1.2 3.6 2.6.8-4.2.1z" fill="none" stroke="#e0241a" stroke-width="0.9"/></svg><div class="t" style="top:298.84px;font-size:11.1px;line-height:14.43px;color:#8a8a8a;font-weight:normal;font-style:italic;left:651.20px;">06.pdf</div><svg style="left:689.5px;top:302.9px" width="13" height="7" viewBox="0 0 13 7" ><g fill="none" stroke="#8a8a8a" stroke-width="1.5"><path d="M5.5 0.9H3.2a2.4 2.4 0 0 0 0 4.8h2.3M7.5 0.9h2.3a2.4 2.4 0 0 1 0 4.8H7.5M4.3 3.3h4.4"/></g></svg><div class="a" style="left:568.4px;top:330.2px;width:410.5px;height:66.4px;border:1.3px solid #22b3bf;border-radius:3px;background:#262626"></div><svg style="left:554.5px;top:357.6px" width="10" height="10" viewBox="0 0 10 10" ><path d="M0 0l9.9 5L0 10z" fill="#8c8c8c"/></svg><svg style="left:582.5px;top:338.7px" width="39" height="48" viewBox="0 0 39 48" ><path d="M5 2.3h19l12.3 12.3v28.3a2.5 2.5 0 0 1-2.5 2.5H4.9a2.5 2.5 0 0 1-2.5-2.5V4.8a2.5 2.5 0 0 1 2.5-2.5z" fill="none" stroke="#bababa" stroke-width="3.8" stroke-linejoin="round"/><path d="M23.5 2.3l12.8 12.8H23.5z" fill="#bababa" stroke="#bababa" stroke-width="1" stroke-linejoin="round"/></svg><div class="t" style="top:346.14px;font-size:12.8px;line-height:16.64px;color:#ffffff;font-weight:normal;left:634.00px;">Envoy (3)</div><svg style="left:634px;top:364.2px" width="14" height="14" viewBox="0 0 14 14" ><path d="M2.2 0h8.6l3 3v10.3H2.2z" fill="#f4f4f4"/><path d="M10.8 0v3h3z" fill="#c8c8c8"/><rect x="0" y="1.3" width="8.3" height="3.1" fill="#e8180c"/><path d="M5.2 11.2l2.6-5 1.2 3.6 2.6.8-4.2.1z" fill="none" stroke="#e0241a" stroke-width="0.9"/></svg><div class="t" style="top:366.44px;font-size:11.1px;line-height:14.43px;color:#e6e6e6;font-weight:normal;font-style:italic;left:651.20px;">03.pdf</div><svg style="left:689.5px;top:370.5px" width="13" height="7" viewBox="0 0 13 7" ><g fill="none" stroke="#b0b0b0" stroke-width="1.5"><path d="M5.5 0.9H3.2a2.4 2.4 0 0 0 0 4.8h2.3M7.5 0.9h2.3a2.4 2.4 0 0 1 0 4.8H7.5M4.3 3.3h4.4"/></g></svg><svg style="left:0;top:0;z-index:10" width="1920" height="1080"><defs><filter id="sh" x="-10%" y="-30%" width="130%" height="160%"><feGaussianBlur in="SourceAlpha" stdDeviation="1.6"/><feOffset dx="2" dy="2.5"/><feComponentTransfer><feFuncA type="linear" slope="0.9"/></feComponentTransfer><feMerge><feMergeNode/><feMergeNode in="SourceGraphic"/></feMerge></filter></defs><path filter="url(#sh)" fill="#f7941d" d="M699.8 300H907.3V279.2L996.2 306.4 907.3 333.5V313H699.8z"/><path filter="url(#sh)" fill="#f7941d" d="M800.2 526H587.8V505L497.6 532.8 587.8 560.7V539.6H800.2z"/></svg><div class="panel" style="left:993px;top:81px;width:913px;height:798px"></div><div class="a" style="left:994px;top:82px;width:523px;height:32px;border-top:1px solid #565656;border-bottom:1px solid #565656;background:repeating-linear-gradient(45deg,#1b1b1b 0px,#1b1b1b 2.75px,#262626 2.75px,#262626 5.5px)"></div><div class="t" style="top:91.25px;font-size:13.8px;line-height:17.94px;color:#9c9c9c;font-weight:bold;left:1009.00px;">Envoy</div><svg style="left:1497.2px;top:95px" width="10.2" height="9" viewBox="0 0 10.2 9" ><path d="M0 0h10.2L5.1 9z" fill="#6c6c6c"/></svg><svg style="left:0;top:0;z-index:5" width="1920" height="1080"><rect x="1003.15" y="127.25" width="515.70" height="358.80" fill="none" stroke="rgba(0,0,20,0.55)" stroke-width="7.90"/><rect x="1003.15" y="127.25" width="515.70" height="358.80" fill="none" stroke="#f1f10b" stroke-width="5.70"/><rect x="90.30" y="402.40" width="397.70" height="158.60" fill="none" stroke="rgba(0,0,20,0.55)" stroke-width="7.80"/><rect x="90.30" y="402.40" width="397.70" height="158.60" fill="none" stroke="#f1f10b" stroke-width="5.60"/></svg><div class="t" style="top:127.76px;font-size:16.1px;line-height:20.93px;color:#c9c9c9;font-weight:bold;left:1008.30px;">Header Details</div><div class="t" style="top:155.85px;font-size:13.3px;line-height:17.29px;color:#bdbdbd;font-weight:normal;left:1009.10px;">Invoice Number</div><div class="a" style="left:1147.5px;top:153.7px;width:89.1px;height:20.6px;background:#262626;border:1px solid #3d3d3d;border-radius:3px"></div><div class="t" style="top:156.44px;font-size:12.7px;line-height:16.51px;color:#e9e9e9;font-weight:normal;left:1152.30px;">SIV00008411</div><div class="t" style="top:183.45px;font-size:13.3px;line-height:17.29px;color:#bdbdbd;font-weight:normal;left:1009.10px;">Invoice Date</div><div class="a" style="left:1147.5px;top:181.3px;width:89.1px;height:21.1px;background:#262626;border:1px solid #3d3d3d;border-radius:3px"></div><div class="t" style="top:184.04px;font-size:12.7px;line-height:16.51px;color:#e9e9e9;font-weight:normal;left:1152.30px;">1/14/2006</div><div class="t" style="top:211.55px;font-size:13.3px;line-height:17.29px;color:#bdbdbd;font-weight:normal;left:1009.10px;">Invoice Total</div><div class="a" style="left:1147.5px;top:209.4px;width:89.1px;height:21.1px;background:#262626;border:1px solid #3d3d3d;border-radius:3px"></div><div class="t" style="top:212.14px;font-size:12.7px;line-height:16.51px;color:#e9e9e9;font-weight:normal;right:688.20px;">$2,807.07</div><div class="a" style="left:1147.5px;top:237.5px;width:179.1px;height:58.8px;background:#262626;border:1px solid #3d3d3d;border-radius:3px"></div><div class="t" style="top:239.54px;font-size:12.7px;line-height:16.51px;color:#e9e9e9;font-weight:normal;left:1152.30px;">70 Duke Park</div><div class="t" style="top:256.44px;font-size:12.7px;line-height:16.51px;color:#e9e9e9;font-weight:normal;left:1152.30px;">Oklahoma City, OK 73156</div><div class="t" style="top:257.75px;font-size:13.3px;line-height:17.29px;color:#bdbdbd;font-weight:normal;left:1009.10px;">Remit To Address</div><div class="t" style="top:304.96px;font-size:16.1px;line-height:20.93px;color:#c9c9c9;font-weight:bold;left:1008.30px;">Line Item Details</div><div class="t" style="top:329.05px;font-size:13.2px;line-height:17.16px;color:#bdbdbd;font-weight:normal;left:1109.50px;">Description</div><div class="t" style="top:329.05px;font-size:13.2px;line-height:17.16px;color:#bdbdbd;font-weight:normal;left:1262.20px;">Quantity</div><div class="t" style="top:329.05px;font-size:13.2px;line-height:17.16px;color:#bdbdbd;font-weight:normal;left:1350.80px;">Price</div><div class="t" style="top:329.39px;font-size:12.85px;line-height:16.71px;color:#bdbdbd;font-weight:normal;left:1416.90px;">Extended Price</div><svg style="left:1012.3px;top:382px" width="10" height="5" viewBox="0 0 10 5" ><path d="M0 0h7l3 2.5-3 2.5H0z" fill="#555"/></svg><div class="a" style="left:1030.2px;top:354.3px;width:224.1px;height:59.6px;background:#262626;border:1px solid #3d3d3d;border-radius:3px"></div><div class="t" style="top:367.44px;font-size:12.7px;line-height:16.51px;color:#e9e9e9;font-weight:normal;left:1034.50px;">CAN-01-DR3060</div><div class="t" style="top:384.34px;font-size:12.7px;line-height:16.51px;color:#e9e9e9;font-weight:normal;left:1034.50px;">Canon DR3060</div><div class="a" style="left:1260px;top:373.1px;width:54.8px;height:21.7px;background:#262626;border:1px solid #3d3d3d;border-radius:3px"></div><div class="t" style="top:375.94px;font-size:12.7px;line-height:16.51px;color:#e9e9e9;font-weight:normal;left:1265.00px;">1</div><div class="a" style="left:1319.9px;top:373.1px;width:90.0px;height:21.7px;background:#262626;border:1px solid #3d3d3d;border-radius:3px"></div><div class="t" style="top:375.94px;font-size:12.7px;line-height:16.51px;color:#e9e9e9;font-weight:normal;right:515.20px;">$2,495.00</div><div class="a" style="left:1414.6px;top:373.1px;width:90.9px;height:21.7px;background:#262626;border:1px solid #3d3d3d;border-radius:3px"></div><div class="t" style="top:375.94px;font-size:12.7px;line-height:16.51px;color:#e9e9e9;font-weight:normal;right:419.50px;">$2,495.00</div><div class="t" style="top:431.56px;font-size:16.1px;line-height:20.93px;color:#c9c9c9;font-weight:bold;left:1008.30px;">Additional Details</div><div class="t" style="top:459.75px;font-size:13.3px;line-height:17.29px;color:#bdbdbd;font-weight:normal;left:1009.10px;">PO Number</div><div class="a" style="left:1147.5px;top:457.5px;width:89.1px;height:21.1px;background:#262626;border:1px solid #3d3d3d;border-radius:3px"></div><div class="t" style="top:460.34px;font-size:12.7px;line-height:16.51px;color:#e9e9e9;font-weight:normal;left:1152.30px;">991465</div><div class="panel" style="left:993px;top:885px;width:913px;height:181px;background:#1f1f1f"></div><div class="a" style="left:994px;top:886px;width:911px;height:39px;background-color:#212121;background-image:linear-gradient(#262626 1px,transparent 1px),linear-gradient(90deg,#262626 1px,transparent 1px);background-size:9px 9px;border-bottom:1px solid #3a3a3a"></div><div class="a" style="left:998.9px;top:925.9px;width:893.5px;height:139.1px;background:#ffffff;overflow:hidden"><div class="t" style="top:55.20px;font-size:14.15px;line-height:18.39px;color:#1b1b1b;font-weight:normal;left:61.30px;">Envoy Imaging Systems, Inc</div><div class="t" style="top:74.70px;font-size:14.15px;line-height:18.39px;color:#1b1b1b;font-weight:normal;left:61.30px;">70 Duke Park</div><div class="t" style="top:94.20px;font-size:14.15px;line-height:18.39px;color:#1b1b1b;font-weight:normal;left:61.30px;">Edmond OK 73013</div><div class="t" style="top:93.95px;font-size:14.4px;line-height:18.72px;color:#1b1b1b;font-weight:normal;left:375.30px;">Please Remit To:</div><div class="t" style="top:113.65px;font-size:14.2px;line-height:18.46px;color:#1b1b1b;font-weight:normal;left:323.10px;">70 Duke Park</div><div class="t" style="top:133.15px;font-size:14.2px;line-height:18.46px;color:#1b1b1b;font-weight:normal;left:323.10px;">Oklahoma City, OK 73156</div><div class="a" style="left:544.1px;top:52.5px;width:295.7px;height:64px;border:1.2px solid #2a2a2a"></div><div class="a" style="left:629.3px;top:52.5px;width:1.2px;height:64px;background:#2a2a2a"></div><div class="a" style="left:544.1px;top:74.1px;width:295.7px;height:1px;background:#666"></div><div class="a" style="left:544.1px;top:96.6px;width:295.7px;height:1px;background:#666"></div><div class="t" style="top:54.15px;font-size:14.3px;line-height:18.59px;color:#1b1b1b;font-weight:normal;left:552.70px;">Invoice</div><div class="t" style="top:54.15px;font-size:14.3px;line-height:18.59px;color:#1b1b1b;font-weight:normal;left:637.90px;">SIV00008411</div><div class="t" style="top:76.45px;font-size:14.3px;line-height:18.59px;color:#1b1b1b;font-weight:normal;left:552.70px;">Date</div><div class="t" style="top:76.45px;font-size:14.3px;line-height:18.59px;color:#1b1b1b;font-weight:normal;left:637.90px;">1/14/2006</div><div class="t" style="top:97.75px;font-size:14.3px;line-height:18.59px;color:#1b1b1b;font-weight:normal;left:552.70px;">Page</div><div class="t" style="top:97.75px;font-size:14.3px;line-height:18.59px;color:#1b1b1b;font-weight:normal;left:637.90px;">1</div></div><div class="a" style="left:1897.9px;top:925.2px;width:7px;height:17px;border-radius:3.5px;background:#164c50"></div><svg style="left:1008px;top:896px" width="21" height="17" viewBox="0 0 21 17" ><g stroke="#c9c9c9" stroke-width="2.2" fill="none"><path d="M2 1.2v14.8M18.9 1.2v14.8"/><path d="M4.5 8.6h12M7.6 5.5L4.5 8.6l3.1 3.1M13.4 5.5l3.1 3.1-3.1 3.1"/></g></svg><svg style="left:1036.2px;top:896px" width="17" height="17" viewBox="0 0 17 17" ><rect x="0" y="0" width="1.8" height="1.8" fill="#c9c9c9"/><rect x="3.6" y="0" width="1.8" height="1.8" fill="#c9c9c9"/><rect x="7.2" y="0" width="1.8" height="1.8" fill="#c9c9c9"/><rect x="10.8" y="0" width="1.8" height="1.8" fill="#c9c9c9"/><rect x="14.4" y="0" width="1.8" height="1.8" fill="#c9c9c9"/><rect x="0" y="3.6" width="1.8" height="1.8" fill="#c9c9c9"/><rect x="14.4" y="3.6" width="1.8" height="1.8" fill="#c9c9c9"/><rect x="0" y="7.2" width="1.8" height="1.8" fill="#c9c9c9"/><rect x="14.4" y="7.2" width="1.8" height="1.8" fill="#c9c9c9"/><rect x="0" y="10.8" width="1.8" height="1.8" fill="#c9c9c9"/><rect x="14.4" y="10.8" width="1.8" height="1.8" fill="#c9c9c9"/><rect x="0" y="14.4" width="1.8" height="1.8" fill="#c9c9c9"/><rect x="3.6" y="14.4" width="1.8" height="1.8" fill="#c9c9c9"/><rect x="7.2" y="14.4" width="1.8" height="1.8" fill="#c9c9c9"/><rect x="10.8" y="14.4" width="1.8" height="1.8" fill="#c9c9c9"/><rect x="14.4" y="14.4" width="1.8" height="1.8" fill="#c9c9c9"/><rect x="4.4" y="4.4" width="7.8" height="7.8" fill="none" stroke="#c9c9c9" stroke-width="1.9"/></svg><svg style="left:1061.8px;top:895px" width="17" height="18" viewBox="0 0 17 18" ><g fill="none" stroke="#c9c9c9" stroke-width="2"><rect x="5" y="1" width="11" height="14" rx="1.5"/><path d="M1.2 4.5v12.3h10.3"/></g></svg><svg style="left:1372px;top:899.5px" width="13" height="11" viewBox="0 0 13 11" ><path d="M1 0v11" stroke="#6a6a6a" stroke-width="1.8"/><path d="M11.5 1L4.5 5.5l7 4.5z" fill="none" stroke="#6a6a6a" stroke-width="1.7"/></svg><svg style="left:1399.8px;top:899.8px" width="8" height="11" viewBox="0 0 8 11" ><path d="M6.8 0.8L1.3 5.5l5.5 4.7" fill="none" stroke="#6a6a6a" stroke-width="1.8"/></svg><div class="a" style="left:1430.5px;top:894.2px;width:23.2px;height:21.4px;border:1px solid #3a3a3a;border-radius:3px"></div><div class="t" style="top:896.54px;font-size:12.5px;line-height:16.25px;color:#6a6a6a;font-weight:normal;left:1438.50px;">1</div><div class="t" style="top:896.54px;font-size:12.5px;line-height:16.25px;color:#6a6a6a;font-weight:normal;left:1456.50px;">/ 1</div><svg style="left:1490.3px;top:899.8px" width="8" height="11" viewBox="0 0 8 11" ><path d="M1.2 0.8l5.5 4.7-5.5 4.7" fill="none" stroke="#6a6a6a" stroke-width="1.8"/></svg><svg style="left:1514px;top:899.5px" width="13" height="11" viewBox="0 0 13 11" ><path d="M11.2 0v11" stroke="#6a6a6a" stroke-width="1.8"/><path d="M0.8 1l7 4.5-7 4.5z" fill="none" stroke="#6a6a6a" stroke-width="1.7"/></svg><svg style="left:1770px;top:895px" width="19" height="19" viewBox="0 0 19 19" ><g fill="none" stroke="#c9c9c9" stroke-width="1.9"><path d="M8 17.8H1V1h7.8l4.5 4.5V8"/></g><path d="M8.8 1l4.5 4.5H8.8z" fill="#c9c9c9"/><path d="M3.5 10h2.5M3.5 14h2.5" stroke="#c9c9c9" stroke-width="1.6"/><circle cx="11.3" cy="13" r="3" fill="none" stroke="#c9c9c9" stroke-width="1.8"/><path d="M13.5 15.2l3.3 3.3" stroke="#c9c9c9" stroke-width="2"/></svg><svg style="left:1795px;top:896px" width="19" height="17" viewBox="0 0 19 17" ><g fill="none" stroke="#c9c9c9" stroke-width="1.9"><path d="M4.5 4.5V1h10v3.5"/><path d="M4.5 12.5H1V5h17v7.5h-3.5"/><rect x="4.5" y="10" width="10" height="6"/></g></svg><svg style="left:1820.8px;top:895px" width="19" height="19" viewBox="0 0 19 19" ><circle cx="9.5" cy="9.5" r="8.5" fill="none" stroke="#c9c9c9" stroke-width="1.9"/><path d="M9.5 7.5v7" stroke="#c9c9c9" stroke-width="2"/><circle cx="9.5" cy="4.8" r="1.2" fill="#c9c9c9"/></svg><div class="a" style="left:1848px;top:897px;width:1px;height:16px;background:#5a5a5a"></div><svg style="left:1859.5px;top:896px" width="19" height="17" viewBox="0 0 19 17" ><g fill="none" stroke="#c9c9c9" stroke-width="1.9"><rect x="1" y="1" width="5" height="5"/><rect x="12.5" y="1" width="5" height="5"/><rect x="12.5" y="11" width="5" height="5"/><path d="M6 3.5h6.5M9.2 3.5v10h3.3"/></g></svg><svg style="left:1881px;top:902px" width="8" height="7" viewBox="0 0 8 7" ><path d="M0 0h8L4 7z" fill="#9a9a9a"/></svg></body></html>
